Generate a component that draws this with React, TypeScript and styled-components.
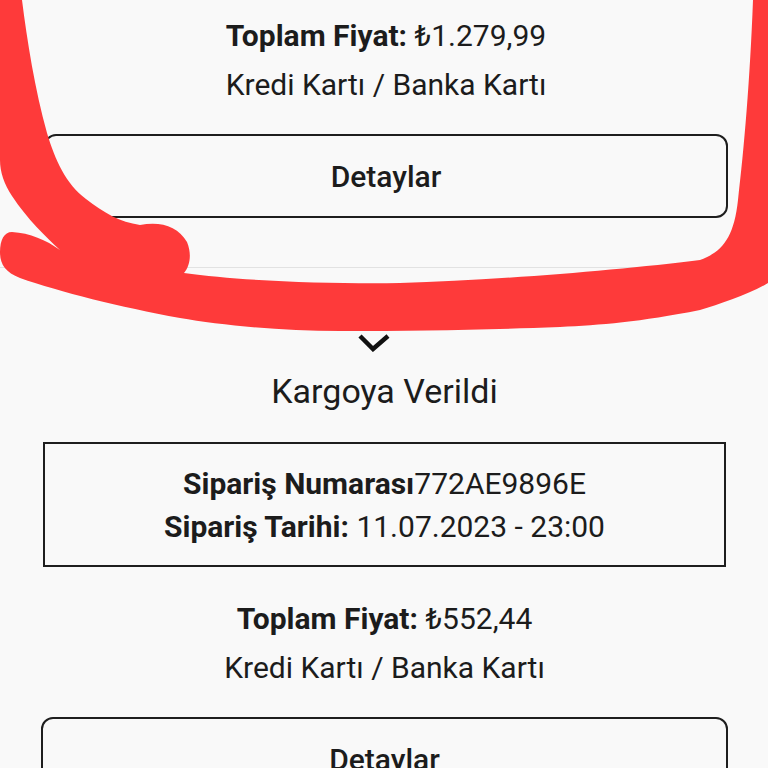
import React from "react";
import styled, { createGlobalStyle } from "styled-components";

const GlobalStyle = createGlobalStyle`
    html, body {
        margin: 0;
        padding: 0;
        background: #f9f9f9;
    }

    body {
        font-family: Roboto, "Noto Sans", sans-serif;
        color: #1c1c1c;
    }
`;

type Order = {
    status?: string;
    number?: string;
    date?: string;
    total: string;
    payment: string;
};

const ORDERS: Order[] = [
    { total: "₺1.279,99", payment: "Kredi Kartı / Banka Kartı" },
    {
        status: "Kargoya Verildi",
        number: "772AE9896E",
        date: "11.07.2023 - 23:00",
        total: "₺552,44",
        payment: "Kredi Kartı / Banka Kartı",
    },
];

const Chevron = () => (
    <svg width="34" height="20" viewBox="0 0 34 20">
        <polyline
            points="3,4 16,17 31,4"
            fill="none"
            stroke="#111"
            strokeWidth="4.5"
            strokeLinejoin="miter"
        />
    </svg>
);

// hand drawn red marker around the first order
const Scribble = () => (
    <svg width="768" height="768" viewBox="0 0 768 768">
        <path
            fill="#fe3a3a"
            d="M0 0 L22 0 C27 40 35 90 47 133 C55 160 66 184 86 199
               C104 213 120 222 140 225 C160 221 178 226 187 242
               C192 254 190 266 184 273 C240 281 330 284 400 283
               C500 280 620 270 700 260 C722 252 734 238 738 200
               C744 150 750 80 753 0 L768 0 L768 283
               C750 294 720 304 700 310 C640 322 600 325 560 327
               C480 330 420 331 340 331 C280 331 220 325 180 318
               C120 307 60 292 20 278 C5 272 0 264 0 252
               C0 240 4 232 12 232 C30 233 46 240 60 250
               C45 236 28 220 12 196 C4 184 0 172 0 160 Z"
        />
    </svg>
);

const App = () => {
    return (
        <React.Fragment>
            <GlobalStyle />
            <Screen>
                {ORDERS.map((order, index) => (
                    <OrderCard key={index} $first={index === 0}>
                        {order.status && (
                            <React.Fragment>
                                <Toggle>
                                    <Chevron />
                                </Toggle>
                                <Status>{order.status}</Status>
                                <InfoBox>
                                    <InfoLine>
                                        <b>Sipariş Numarası</b>
                                        {order.number}
                                    </InfoLine>
                                    <InfoLine>
                                        <b>Sipariş Tarihi:</b> {order.date}
                                    </InfoLine>
                                </InfoBox>
                            </React.Fragment>
                        )}
                        <Summary $first={index === 0}>
                            <SummaryLine>
                                <b>Toplam Fiyat:</b> {order.total}
                            </SummaryLine>
                            <SummaryLine>{order.payment}</SummaryLine>
                        </Summary>
                        <DetailButton>Detaylar</DetailButton>
                    </OrderCard>
                ))}
                <Overlay>
                    <Scribble />
                </Overlay>
            </Screen>
        </React.Fragment>
    );
};

export default App;

const Screen = styled.div`
    position: relative;
    width: 768px;
    height: 768px;
    overflow: hidden;
    background: #f9f9f9;
`;

const OrderCard = styled.div<{ $first?: boolean }>`
    display: flex;
    flex-direction: column;
    align-items: stretch;
    padding: ${(p) => (p.$first ? "11px 40px 49px 44px" : "0 40px 0 41px")};
    border-bottom: ${(p) => (p.$first ? "1px solid #e2e2e2" : "none")};
`;

const Toggle = styled.div`
    display: flex;
    justify-content: center;
    padding: 64px 22px 0 0;
    height: 20px;
`;

const Status = styled.div`
    margin-top: 19px;
    text-align: center;
    font-size: 34px;
    line-height: 40px;
`;

const InfoBox = styled.div`
    margin: 31px 2px 0 2px;
    padding: 18px 0 17px;
    border: 2px solid #1e1e1e;
    display: flex;
    flex-direction: column;
    align-items: center;

    b {
        font-weight: 700;
    }
`;

const InfoLine = styled.div`
    font-size: 30px;
    line-height: 43px;
    white-space: nowrap;
`;

const Summary = styled.div<{ $first?: boolean }>`
    margin-top: ${(p) => (p.$first ? "0" : "27px")};
    display: flex;
    flex-direction: column;
    align-items: center;

    b {
        font-weight: 700;
    }
`;

const SummaryLine = styled.div`
    font-size: 30px;
    line-height: 49px;
    white-space: nowrap;
`;

const DetailButton = styled.button`
    margin-top: 25px;
    height: 84px;
    border: 2px solid #1e1e1e;
    border-radius: 12px;
    background: transparent;
    font-family: Roboto, "Noto Sans", sans-serif;
    font-size: 30px;
    font-weight: 500;
    color: #1c1c1c;
    cursor: pointer;
`;

const Overlay = styled.div`
    position: absolute;
    inset: 0;
    pointer-events: none;
`;
